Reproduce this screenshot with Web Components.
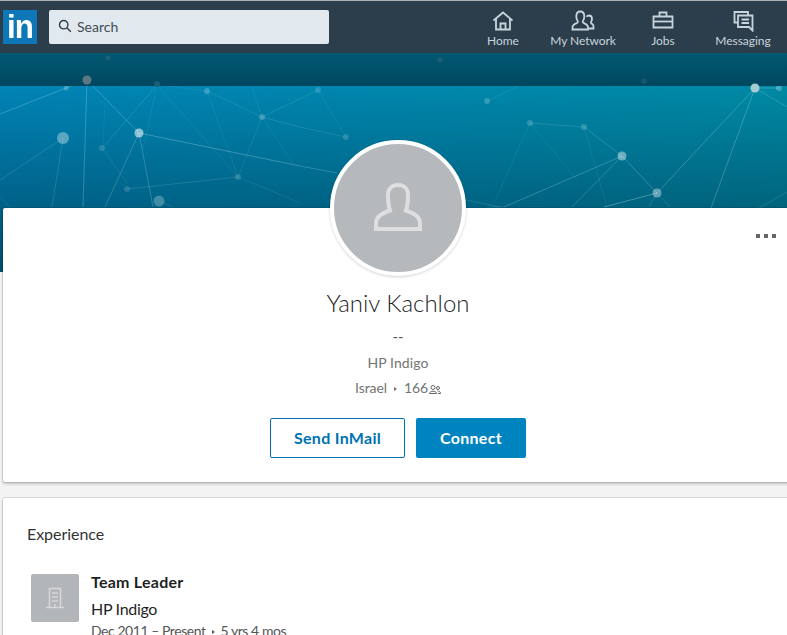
<!DOCTYPE html>
<html lang="en">
<head>
<meta charset="utf-8">
<title>Yaniv Kachlon</title>
<style>
  html, body { margin: 0; height: 635px; overflow: hidden; background: #f3f3f3; }
  body { font-family: Lato, "Liberation Sans", sans-serif; border-top: 1px solid #aab0b4; box-sizing: border-box; }
</style>
</head>
<body>

<top-nav>
  <nav-item icon="home">Home</nav-item>
  <nav-item icon="network">My Network</nav-item>
  <nav-item icon="jobs">Jobs</nav-item>
  <nav-item icon="messaging">Messaging</nav-item>
</top-nav>

<profile-banner></profile-banner>

<profile-card>
  <span slot="name">Yaniv Kachlon</span>
  <span slot="headline">--</span>
  <span slot="company">HP Indigo</span>
  <span slot="location">Israel</span>
  <span slot="connections">166</span>
</profile-card>

<section-card>
  <span slot="title">Experience</span>
  <experience-entry>
    <span slot="role">Team Leader</span>
    <span slot="company">HP Indigo</span>
    <span slot="dates">Dec 2011 – Present</span>
    <span slot="length">5 yrs 4 mos</span>
  </experience-entry>
</section-card>

<script>
// Top bar icons, all stroked with currentColor on a 24 box
const navIcons = {
  home: '<path d="M2.500 12.500 12 4.500l9.500 8"/><path d="M5 10.500v11h14v-11"/><path d="M9.500 21.500V15.500h5v6"/>',
  network: '<path d="M1.500 21.500v-2.200c0-2.200 2-3.200 4.200-4.100 1.200-.5 1.400-1.300 1-2.200C5.700 11.500 5.300 10 5.300 8.500 5.300 5.500 7 3.500 9.300 3.500s4 2 4 5c0 1.500-.4 3-1.400 4.500-.4.9-.2 1.700 1 2.200 2.200.9 4.100 1.900 4.100 4.100v2.200z"/><path d="M15.500 8.800c.6-.9 1.400-1.300 2.400-1.300 1.900 0 3.100 1.600 3.100 3.500 0 1.200-.4 2-1 3-.3.700-.1 1.200.7 1.600 1.200.6 1.800 1.300 1.800 2.600v2.300h-5"/>',
  jobs: '<path d="M2.500 8.500h19v11h-19z"/><path d="M2.500 13.500h19"/><path d="M8.500 8.500V4.500h7v4"/>',
  messaging: '<path d="M6.500 14.500H3.500V4h13.500V7.500"/><path d="M7 7.500h14.500v15l-3.500-3.500H7z"/><path d="M10.500 11.500h7.500M10.500 15h7.500"/>'
};

const topNavTemplate = document.createElement('template');
topNavTemplate.innerHTML = `
  <style>
    :host { display: flex; align-items: center; height: 52px; background: #2c3e4c; padding: 0 4px 0 3px; position: relative; z-index: 2; }
    .logo { width: 34px; height: 34px; background: #0d77b7; color: #fff; text-align: center; }
    .logo span { display: block; font: bold 34px/34px "Liberation Sans", sans-serif; transform: scaleX(.92); letter-spacing: -1px; margin-top: -1px; }
    .search { width: 280px; height: 34px; margin-left: 12px; background: #e1e9ee; border-radius: 2px; display: flex; align-items: center;
      gap: 5px; padding: 0 0 2px 9px; box-sizing: border-box; font-size: 14px; color: #3f4e59; }
    .search svg { width: 14px; height: 14px; fill: none; stroke: #2c3e4c; stroke-width: 1.400; }
    .items { margin-left: auto; display: flex; }
  </style>
  <div class="logo"><span>in</span></div>
  <div class="search">
    <svg viewBox="0 0 14 14"><circle cx="5.700" cy="5.700" r="4.200"/><path d="M8.800 8.800l4 4"/></svg>
    <span>Search</span>
  </div>
  <div class="items"><slot></slot></div>
`;

class TopNav extends HTMLElement {
  connectedCallback() {
    this.attachShadow({ mode: 'open' }).appendChild(topNavTemplate.content.cloneNode(true));
  }
}
customElements.define('top-nav', TopNav);

class NavItem extends HTMLElement {
  connectedCallback() {
    const shadowRoot = this.attachShadow({ mode: 'open' });
    shadowRoot.innerHTML = `
      <style>
        :host { display: flex; flex-direction: column; align-items: center; width: 80px; color: #c8d4db; font-size: 12px; line-height: 16px; letter-spacing: -.05px; padding-top: 3px; }
        svg { width: 24px; height: 24px; fill: none; stroke: #c8d4db; stroke-width: 1.800; margin-bottom: 1px; }
      </style>
      <svg viewBox="0 0 24 24">${navIcons[this.getAttribute('icon')]}</svg>
      <slot></slot>
    `;
  }
}
customElements.define('nav-item', NavItem);

// Banner network picture: [x1, y1, x2, y2, opacity] in page coordinates
const bannerLines = [
  [66,88,0,114,.25],[87,80,66,88,.25],[87,80,83,207,.25],[87,80,139,133,.25],[157,85,105,145,.14],[139,133,300,166,.28],[300,166,337,173,.22],
  [139,133,105,207,.22],[139,133,153,207,.22],[63,138,0,180,.15],[63,138,52,207,.15],[127,189,238,177,.15],[238,177,300,203,.1],
  [102,148,127,183,.1],[262,117,238,177,.1],[262,117,318,90,.12],[262,117,300,127,.14],[300,127,346,137,.12],[207,91,262,117,.1],[207,91,238,177,.08],
  [157,85,238,177,.08],[157,85,207,91,.08],[157,85,143,150,.08],[159,201,173,207,.1],[0,197,10,207,.1],[262,117,293,163,.07],[252,87,262,117,.07],
  [105,102,103,147,.06],[467,200,500,207,.14],[755,88,657,193,.24],[755,88,711,208,.24],[755,88,779,88,.24],[755,88,787,107,.2],[657,193,604,207,.32],
  [657,193,649,207,.15],[657,193,670,207,.15],[622,156,657,193,.24],[622,156,504,207,.24],[622,156,572,207,.2],[584,127,622,156,.18],[530,123,584,127,.14],
  [530,123,494,203,.08],[530,123,577,180,.08],[584,127,607,207,.08],[787,192,759,208,.15],[487,101,587,53,.1],[487,207,504,207,.15],[318,90,346,137,.08]
];
// [x, y, r, opacity]
const bannerNodes = [
  [66,88,2.500,.22],[139,133,4.500,.55],[63,138,6,.35],[207,91,3,.2],[262,117,3,.2],[102,148,3,.15],[238,177,3,.15],[127,189,3,.14],[159,201,5.500,.25],
  [346,137,3,.15],[318,90,3,.15],[487,101,3,.2],[530,123,3,.18],[584,127,3,.18],[622,156,4.500,.42],[657,193,4.500,.38],[779,88,3,.25]
];

class ProfileBanner extends HTMLElement {
  connectedCallback() {
    const lines = bannerLines.map(l => `<line x1="${l[0]}" y1="${l[1]}" x2="${l[2]}" y2="${l[3]}" stroke-opacity="${l[4]}"/>`).join('');
    const nodes = bannerNodes.map(n => `<circle cx="${n[0]}" cy="${n[1]}" r="${n[2]}" fill-opacity="${n[3]}"/>`).join('');
    this.attachShadow({ mode: 'open' }).innerHTML = `
      <style>
        :host { display: block; height: 219px; }
        svg { display: block; width: 787px; height: 219px; }
        .soft { filter: blur(.4px); }
      </style>
      <svg viewBox="0 53 787 219">
        <defs>
          <linearGradient id="across"><stop offset="0" stop-color="#0084b6"/><stop offset="1" stop-color="#0089a4"/></linearGradient>
          <linearGradient id="down" x2="0" y2="1"><stop offset="0" stop-color="#012a40" stop-opacity="0"/><stop offset="1" stop-color="#012a40" stop-opacity=".6"/></linearGradient>
          <linearGradient id="band" x2="0" y2="1"><stop offset="0" stop-color="#01566f"/><stop offset="1" stop-color="#02435b"/></linearGradient>
        </defs>
        <rect x="0" y="53" width="787" height="219" fill="url(#across)"/>
        <rect x="0" y="86" width="787" height="186" fill="url(#down)"/>
        <g class="soft" stroke="#cfeef5" stroke-width="1">${lines}</g>
        <g class="soft" fill="#fff">${nodes}</g>
        <rect x="0" y="53" width="787" height="33" fill="url(#band)" fill-opacity=".94"/>
        <circle cx="87" cy="80" r="4.500" fill="#5f7782"/>
        <circle cx="157" cy="84" r="3" fill="#1b5f74"/>
        <circle cx="108" cy="58" r="2.500" fill="#1a6078"/>
        <circle cx="644" cy="81" r="2.800" fill="#15586a"/>
        <circle cx="440" cy="60" r="2.500" fill="#1a6078"/>
        <circle cx="755" cy="88" r="4.500" fill="#a5cdd3"/>
      </svg>
    `;
  }
}
customElements.define('profile-banner', ProfileBanner);

const profileCardTemplate = document.createElement('template');
profileCardTemplate.innerHTML = `
  <style>
    :host { display: flex; flex-direction: column; align-items: center; position: relative; width: 790px; height: 274px; box-sizing: border-box;
      margin: -64px 0 0 3px; background: #fff; border-radius: 2px; box-shadow: 0 0 0 1px rgba(0,0,0,.1), 0 2px 3px rgba(0,0,0,.2); }
    .avatar { width: 128px; height: 128px; margin-top: -68px; flex: none; border: 4px solid #fff; border-radius: 50%; background: #b6b9bc;
      box-shadow: 0 1px 3px rgba(0,0,0,.18); display: flex; align-items: center; justify-content: center; }
    .avatar svg { width: 48px; height: 48px; margin-bottom: 2px; fill: none; stroke: #dcdee0; stroke-width: 4; }
    .name { font-size: 24px; font-weight: 300; line-height: 30px; margin-top: 12px; color: #1f1f1f; }
    .headline { font-size: 15px; line-height: 20px; margin-top: 8px; color: #555; }
    .company { font-size: 14px; line-height: 20px; margin-top: 7px; color: #737373; letter-spacing: .1px; }
    .meta { font-size: 14px; line-height: 20px; margin-top: 5px; color: #737373; display: flex; align-items: center; letter-spacing: -.1px; }
    .dot { width: 0; height: 0; border-left: 3px solid #737373; border-top: 2px solid transparent; border-bottom: 2px solid transparent; margin: 1px 7px 0 7px; }
    .meta svg { width: 12px; height: 12px; margin: 1px 0 0 1px; fill: none; stroke: #666; stroke-width: 2; }
    .actions { display: flex; gap: 11px; margin-top: 20px; }
    button { height: 40px; font: bold 16px Lato, "Liberation Sans", sans-serif; letter-spacing: .3px; border-radius: 2px; box-sizing: border-box; padding: 0 0 2px; }
    .outline { width: 135px; background: #fff; color: #0073b1; border: 1px solid #0073b1; }
    .solid { width: 110px; background: #0084bf; color: #fff; border: 0; }
    .more { position: absolute; top: 26px; right: 17px; display: flex; gap: 4px; }
    .more i { width: 4px; height: 4px; background: #666; }
  </style>
  <div class="avatar">
    <svg viewBox="0 0 48 48">
      <path d="M2 46V40C2 33 9 30 16 27.500C14.500 23 14 18 14 12C14 6 18 2 24 2s10 4 10 10c0 6-.5 11-2 15.500C39 30 46 33 46 40V46z"/>
    </svg>
  </div>
  <div class="name"><slot name="name"></slot></div>
  <div class="headline"><slot name="headline"></slot></div>
  <div class="company"><slot name="company"></slot></div>
  <div class="meta">
    <slot name="location"></slot><span class="dot"></span><slot name="connections"></slot>
    <svg viewBox="0 0 24 24"><circle cx="8" cy="9" r="4"/><circle cx="18" cy="10" r="3"/><path d="M1 21c0-6 14-6 14 0zM17 16c3 0 6 1 6 5h-5"/></svg>
  </div>
  <div class="actions">
    <button class="outline">Send InMail</button>
    <button class="solid">Connect</button>
  </div>
  <div class="more"><i></i><i></i><i></i></div>
`;

class ProfileCard extends HTMLElement {
  connectedCallback() {
    this.attachShadow({ mode: 'open' }).appendChild(profileCardTemplate.content.cloneNode(true));
  }
}
customElements.define('profile-card', ProfileCard);

const sectionCardTemplate = document.createElement('template');
sectionCardTemplate.innerHTML = `
  <style>
    :host { display: block; width: 790px; margin: 16px 0 0 3px; padding: 26px 24px 24px; box-sizing: border-box; background: #fff; border-radius: 2px;
      box-shadow: 0 0 0 1px rgba(0,0,0,.1), 0 2px 3px rgba(0,0,0,.2); }
    .title { font-size: 16px; line-height: 20px; color: #333; margin-bottom: 30px; letter-spacing: -.05px; }
  </style>
  <div class="title"><slot name="title"></slot></div>
  <slot></slot>
`;

class SectionCard extends HTMLElement {
  connectedCallback() {
    this.attachShadow({ mode: 'open' }).appendChild(sectionCardTemplate.content.cloneNode(true));
  }
}
customElements.define('section-card', SectionCard);

const experienceTemplate = document.createElement('template');
experienceTemplate.innerHTML = `
  <style>
    :host { display: flex; gap: 12px; margin-left: 4px; }
    .logo { width: 48px; height: 48px; flex: none; background: #b3b6b9; border-radius: 2px; display: flex; align-items: center; justify-content: center; }
    .logo svg { width: 24px; height: 24px; fill: none; stroke: #d5d7d9; stroke-width: 1.500; }
    .role { font-size: 16px; font-weight: bold; line-height: 20px; color: #1f1f1f; margin-top: -2px; letter-spacing: .25px; }
    .company { font-size: 16px; line-height: 20px; color: #1f1f1f; margin-top: 7px; letter-spacing: -.3px; }
    .dates { font-size: 14px; line-height: 20px; color: #555; margin-top: 2px; display: flex; align-items: center; letter-spacing: -.45px; }
    .dot { width: 0; height: 0; border-left: 3px solid #555; border-top: 2px solid transparent; border-bottom: 2px solid transparent; margin: 1px 6px 0 6px; }
  </style>
  <div class="logo">
    <svg viewBox="0 0 24 24"><path d="M6.500 21.500V2.500h11v19"/><path d="M3 21.500h18"/><path d="M9 7h6M9 11h6M9 15h6M12 18v3.500"/></svg>
  </div>
  <div>
    <div class="role"><slot name="role"></slot></div>
    <div class="company"><slot name="company"></slot></div>
    <div class="dates"><slot name="dates"></slot><span class="dot"></span><slot name="length"></slot></div>
  </div>
`;

class ExperienceEntry extends HTMLElement {
  connectedCallback() {
    this.attachShadow({ mode: 'open' }).appendChild(experienceTemplate.content.cloneNode(true));
  }
}
customElements.define('experience-entry', ExperienceEntry);
</script>
</body>
</html>
